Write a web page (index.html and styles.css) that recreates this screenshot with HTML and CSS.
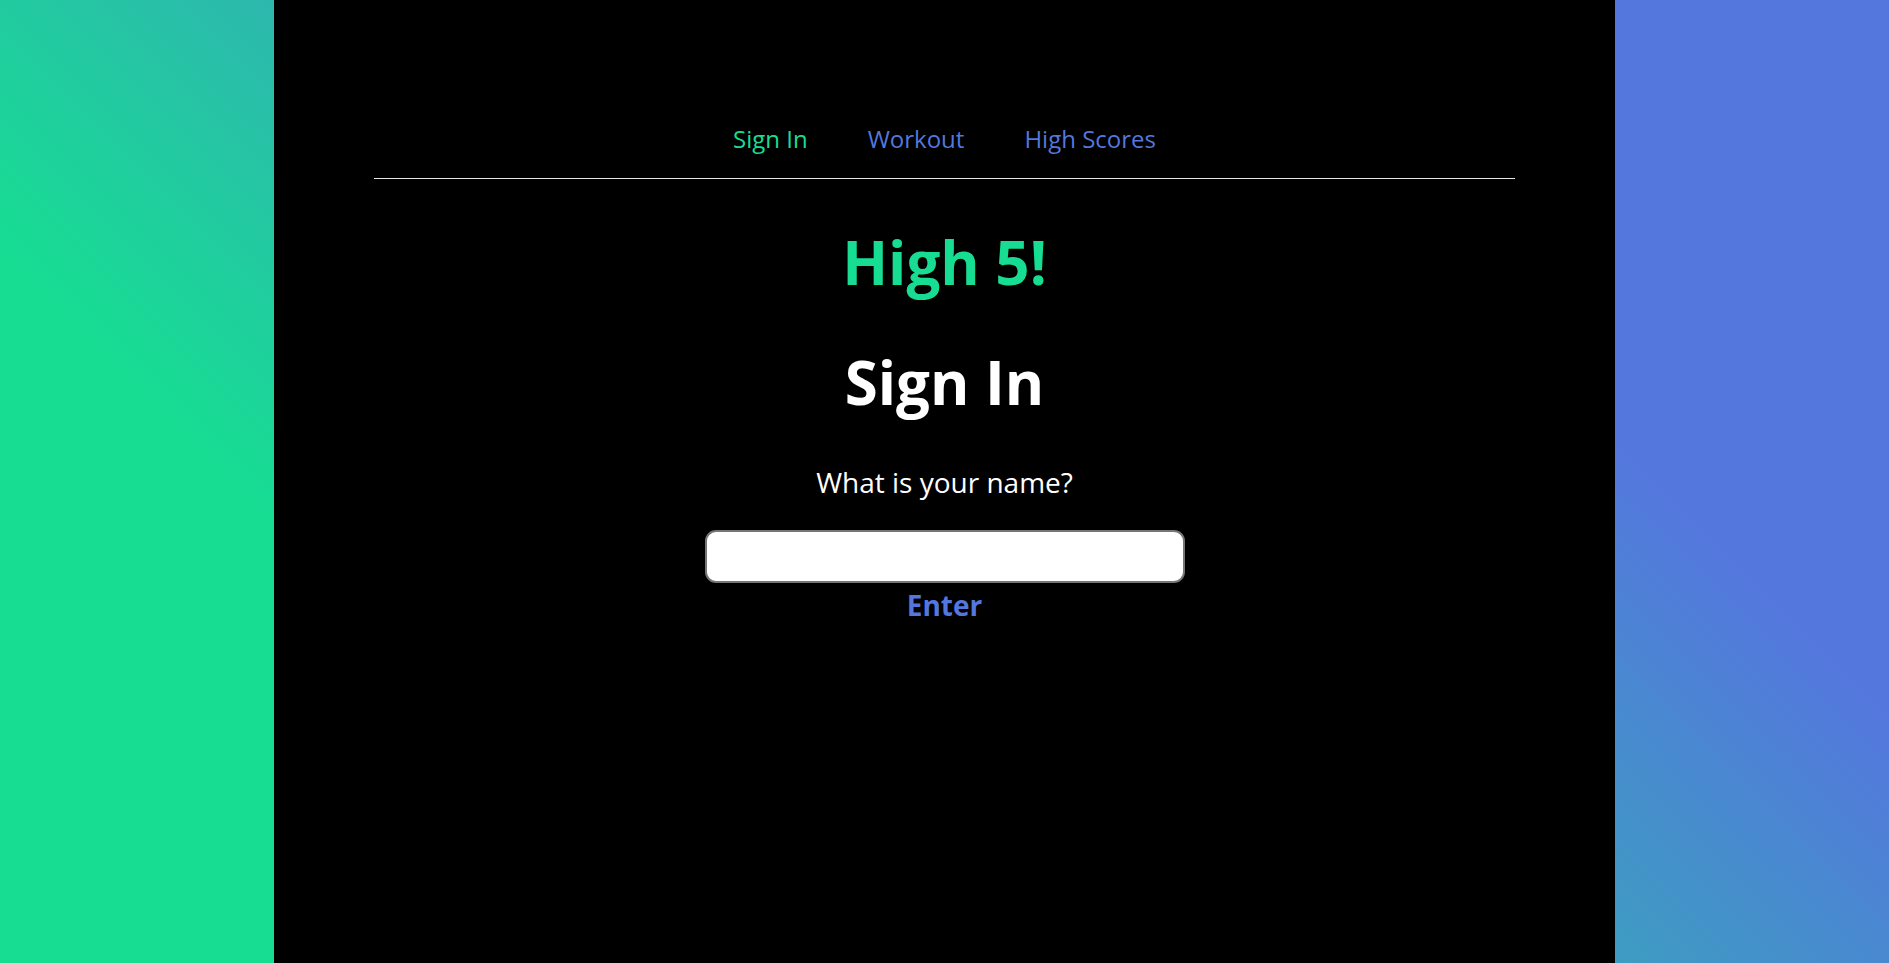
FILE: index.html
```html
<!DOCTYPE html>
<html lang="en">
<head>
<meta charset="utf-8">
<title>High 5!</title>
<link rel="stylesheet" href="styles.css">
</head>
<body>
<div class="page">
  <nav class="nav">
    <a class="nav-link active" href="#">Sign In</a>
    <a class="nav-link" href="#">Workout</a>
    <a class="nav-link" href="#">High Scores</a>
  </nav>
  <main class="content">
    <h1 class="brand">High 5!</h1>
    <h2 class="title">Sign In</h2>
    <p class="question">What is your name?</p>
    <input class="name-input" type="text" aria-label="Name">
    <button class="enter-btn" type="button">Enter</button>
  </main>
</div>
</body>
</html>
```

FILE: styles.css
```css
html, body {
  height: 100%;
}
body {
  margin: 0;
  background: linear-gradient(45deg, #17dd93 25%, #5477dd 75%);
  font-family: "Open Sans", "Noto Sans", sans-serif;
  color: #fff;
}
.page {
  width: 71%;
  min-height: 100%;
  margin: 0 auto;
  background: #000;
  display: flex;
  flex-direction: column;
}
.nav {
  margin: 0 100px;
  padding: 124px 0 24px;
  border-bottom: 1px solid #e6e6e6;
  display: flex;
  justify-content: center;
  gap: 60px;
}
.nav-link {
  font-size: 24px;
  line-height: 30px;
  color: #5477dd;
  text-decoration: none;
}
.nav-link.active {
  color: #17dd93;
}
.content {
  display: flex;
  flex-direction: column;
  align-items: center;
}
.brand {
  margin: 47px 0 0;
  font-size: 60px;
  line-height: 72px;
  font-weight: 700;
  color: #17dd93;
}
.title {
  margin: 48px 0 0;
  font-size: 60px;
  line-height: 72px;
  font-weight: 700;
  color: #fff;
}
.question {
  margin: 47px 0 0;
  font-size: 28px;
  line-height: 34px;
  color: #fff;
}
.name-input {
  margin: 31px 0 0;
  box-sizing: border-box;
  width: 480px;
  height: 53px;
  border: 2px solid #767676;
  border-radius: 11px;
  background: #fff;
  font-size: 24px;
  padding: 0 12px;
}
.enter-btn {
  margin: 5px 0 0;
  padding: 0;
  border: none;
  background: none;
  font-family: inherit;
  font-size: 28px;
  line-height: 34px;
  font-weight: 700;
  color: #5477dd;
  cursor: pointer;
}
```
